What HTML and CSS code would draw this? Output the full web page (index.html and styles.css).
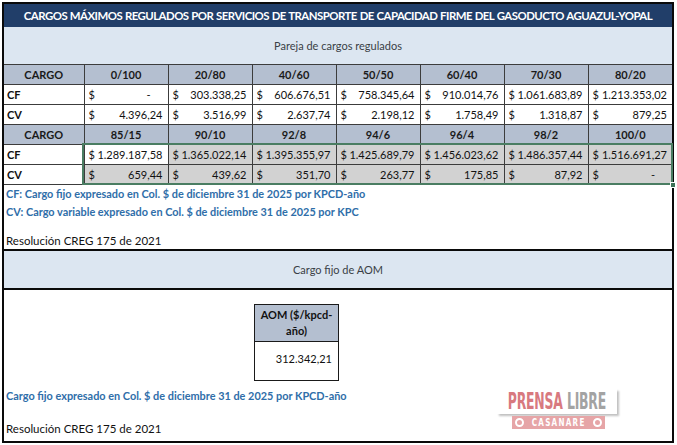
FILE: index.html
```html
<!DOCTYPE html>
<html lang="es">
<head>
<meta charset="utf-8">
<title>Cargos máximos regulados</title>
<link rel="stylesheet" href="styles.css">
</head>
<body>
<div class="sheet">
  <div class="title">CARGOS MÁXIMOS REGULADOS POR SERVICIOS DE TRANSPORTE DE CAPACIDAD FIRME DEL GASODUCTO AGUAZUL-YOPAL</div>
  <div class="band band-top">Pareja de cargos regulados</div>
  <div class="table-wrap">
    <table class="grid">
      <colgroup>
        <col class="c-label"><col class="c-val"><col class="c-val"><col class="c-val"><col class="c-val"><col class="c-val"><col class="c-val"><col class="c-val">
      </colgroup>
      <tr class="head">
        <th>CARGO</th><th>0/100</th><th>20/80</th><th>40/60</th><th>50/50</th><th>60/40</th><th>70/30</th><th>80/20</th>
      </tr>
      <tr>
        <td class="lbl">CF</td>
        <td><span class="acc"><span>$</span><span class="dash">-</span></span></td>
        <td><span class="acc"><span>$</span><span>303.338,25</span></span></td>
        <td><span class="acc"><span>$</span><span>606.676,51</span></span></td>
        <td><span class="acc"><span>$</span><span>758.345,64</span></span></td>
        <td><span class="acc"><span>$</span><span>910.014,76</span></span></td>
        <td><span class="acc"><span>$</span><span>1.061.683,89</span></span></td>
        <td><span class="acc"><span>$</span><span>1.213.353,02</span></span></td>
      </tr>
      <tr>
        <td class="lbl">CV</td>
        <td><span class="acc"><span>$</span><span>4.396,24</span></span></td>
        <td><span class="acc"><span>$</span><span>3.516,99</span></span></td>
        <td><span class="acc"><span>$</span><span>2.637,74</span></span></td>
        <td><span class="acc"><span>$</span><span>2.198,12</span></span></td>
        <td><span class="acc"><span>$</span><span>1.758,49</span></span></td>
        <td><span class="acc"><span>$</span><span>1.318,87</span></span></td>
        <td><span class="acc"><span>$</span><span>879,25</span></span></td>
      </tr>
      <tr class="head">
        <th>CARGO</th><th>85/15</th><th>90/10</th><th>92/8</th><th>94/6</th><th>96/4</th><th>98/2</th><th>100/0</th>
      </tr>
      <tr>
        <td class="lbl">CF</td>
        <td><span class="acc"><span>$</span><span>1.289.187,58</span></span></td>
        <td class="gray"><span class="acc"><span>$</span><span>1.365.022,14</span></span></td>
        <td class="gray"><span class="acc"><span>$</span><span>1.395.355,97</span></span></td>
        <td class="gray"><span class="acc"><span>$</span><span>1.425.689,79</span></span></td>
        <td class="gray"><span class="acc"><span>$</span><span>1.456.023,62</span></span></td>
        <td class="gray"><span class="acc"><span>$</span><span>1.486.357,44</span></span></td>
        <td class="gray"><span class="acc"><span>$</span><span>1.516.691,27</span></span></td>
      </tr>
      <tr>
        <td class="lbl">CV</td>
        <td class="gray"><span class="acc"><span>$</span><span>659,44</span></span></td>
        <td class="gray"><span class="acc"><span>$</span><span>439,62</span></span></td>
        <td class="gray"><span class="acc"><span>$</span><span>351,70</span></span></td>
        <td class="gray"><span class="acc"><span>$</span><span>263,77</span></span></td>
        <td class="gray"><span class="acc"><span>$</span><span>175,85</span></span></td>
        <td class="gray"><span class="acc"><span>$</span><span>87,92</span></span></td>
        <td class="gray"><span class="acc"><span>$</span><span class="dash">-</span></span></td>
      </tr>
    </table>
    <div class="selection"><span class="handle"></span></div>
  </div>
  <div class="notes">
    <p class="note">CF: Cargo fijo expresado en Col. $ de diciembre 31 de 2025 por KPCD-año</p>
    <p class="note">CV: Cargo variable expresado en Col. $ de diciembre 31 de 2025 por KPC</p>
    <p class="res res-1">Resolución CREG 175 de 2021</p>
  </div>
  <div class="band band-aom">Cargo fijo de AOM</div>
  <div class="aom-area">
    <div class="aom-box">
      <div class="aom-head">AOM ($/kpcd-<br>año)</div>
      <div class="aom-val">312.342,21</div>
    </div>
    <p class="note note-aom">Cargo fijo expresado en Col. $ de diciembre 31 de 2025 por KPCD-año</p>
    <p class="res res-2">Resolución CREG 175 de 2021</p>
    <div class="logo">
      <div class="logo-top"><span class="logo-words"><span class="prensa">PRENSA</span> <span class="libre">LIBRE</span></span></div>
      <div class="logo-bar"><span class="ring"></span><span class="casanare">CASANARE</span><span class="ring"></span></div>
    </div>
  </div>
</div>
</body>
</html>
```

FILE: styles.css
```css
* { box-sizing: border-box; }

html, body {
  margin: 0;
  padding: 0;
  background: #ffffff;
}

body {
  font-family: Lato, "Open Sans", "Liberation Sans", sans-serif;
  font-size: 11px;
  color: #111;
  padding: 2px 0 0 2px;
}

.sheet {
  position: relative;
  width: 672px;
  height: 441px;
  border: 2px solid #0a0a0a;
  display: flex;
  flex-direction: column;
}

.title {
  height: 23px;
  background: #213e69;
  color: #ffffff;
  font-weight: 700;
  font-size: 11.4px;
  display: flex;
  align-items: center;
  justify-content: center;
  white-space: nowrap;
  letter-spacing: -0.52px;
  word-spacing: 0.5px;
}

.band {
  background: #dce6f1;
  color: #3a3f46;
  display: flex;
  align-items: center;
  justify-content: center;
  font-size: 11px;
}

.band-top {
  height: 37px;
}

.table-wrap {
  position: relative;
}

.grid {
  width: 668px;
  table-layout: fixed;
  border-collapse: collapse;
}

.c-label { width: 80px; }
.c-val { width: 84px; }

.grid th,
.grid td {
  height: 20px;
  padding: 0;
  border: 1px solid #3c3c3c;
  font-size: 11px;
  line-height: 18px;
  white-space: nowrap;
}

.grid tr > :first-child { border-left: none; }
.grid tr > :last-child { border-right: none; }

.grid th {
  background: #b4bfd0;
  font-weight: 700;
  text-align: center;
  color: #1a1a1a;
}

.grid td.lbl {
  font-weight: 700;
  padding-left: 3px;
}

.grid td.gray {
  background: #d2d2d2;
}

.acc {
  display: flex;
  justify-content: space-between;
  padding: 0 5px 0 4px;
}

.dash {
  padding-right: 12px;
}

.selection {
  position: absolute;
  left: 78px;
  top: 79px;
  width: 591px;
  height: 42px;
  border: 2px solid #4a7d62;
  pointer-events: none;
}

.handle {
  position: absolute;
  right: -5px;
  bottom: -5px;
  width: 6px;
  height: 6px;
  background: #3e7358;
  border: 1px solid #ffffff;
}

.notes {
  height: 66px;
  border-bottom: 2px solid #0a0a0a;
  display: flex;
  flex-direction: column;
}

.note {
  margin: 0;
  color: #2f6ea9;
  font-weight: 700;
  font-size: 10.9px;
  padding-left: 2px;
  line-height: 18px;
}

.res {
  margin: 0;
  font-size: 11.5px;
  color: #111;
  padding-left: 2px;
  line-height: 16px;
}

.res-1 {
  margin-top: auto;
  margin-bottom: 0;
}

.band-aom {
  height: 39px;
  border-bottom: 2px solid #0a0a0a;
}

.aom-area {
  position: relative;
  flex: 1;
  display: flex;
  flex-direction: column;
}

.aom-box {
  margin: 14px 0 0 250px;
  width: 85px;
  border: 1px solid #1a1a1a;
}

.aom-head {
  height: 37px;
  background: #b4bfd0;
  border-bottom: 1px solid #1a1a1a;
  font-weight: 700;
  text-align: center;
  font-size: 11px;
  line-height: 16px;
  padding-top: 2px;
}

.aom-val {
  height: 38px;
  text-align: right;
  padding: 10px 6px 0 0;
  font-size: 11px;
}

.note-aom {
  margin-top: 6px;
}

.res-2 {
  margin-top: 16px;
}

.logo {
  position: absolute;
  left: 493px;
  top: 99px;
  width: 120px;
  display: flex;
  flex-direction: column;
  align-items: flex-start;
}

.logo-top {
  width: 120px;
  height: 25px;
  background: #ffffff;
  box-shadow: 2px 2px 2px rgba(0, 0, 0, 0.25);
  display: flex;
  align-items: center;
  justify-content: center;
  overflow: visible;
}

.logo-words {
  display: inline-block;
  font-family: "DejaVu Sans Condensed", "DejaVu Sans", sans-serif;
  font-weight: 700;
  font-size: 23px;
  line-height: 25px;
  white-space: nowrap;
  letter-spacing: -0.3px;
  transform: scaleX(0.6);
}

.prensa {
  color: #d8797f;
}

.libre {
  color: #a3a3a3;
}

.logo-bar {
  margin: 2px 0 0 15px;
  width: 93px;
  height: 13px;
  background: #e6a5a7;
  display: flex;
  align-items: center;
  justify-content: space-between;
  padding: 0 3px;
}

.casanare {
  display: inline-block;
  color: #ffffff;
  font-family: "DejaVu Sans Condensed", "DejaVu Sans", sans-serif;
  font-weight: 700;
  font-size: 10px;
  line-height: 13px;
  letter-spacing: 1.6px;
  transform: scaleX(0.8);
}

.ring {
  flex: none;
  width: 9px;
  height: 9px;
  border-radius: 50%;
  border: 2px solid #ffffff;
  background: #e6a5a7;
}
```
